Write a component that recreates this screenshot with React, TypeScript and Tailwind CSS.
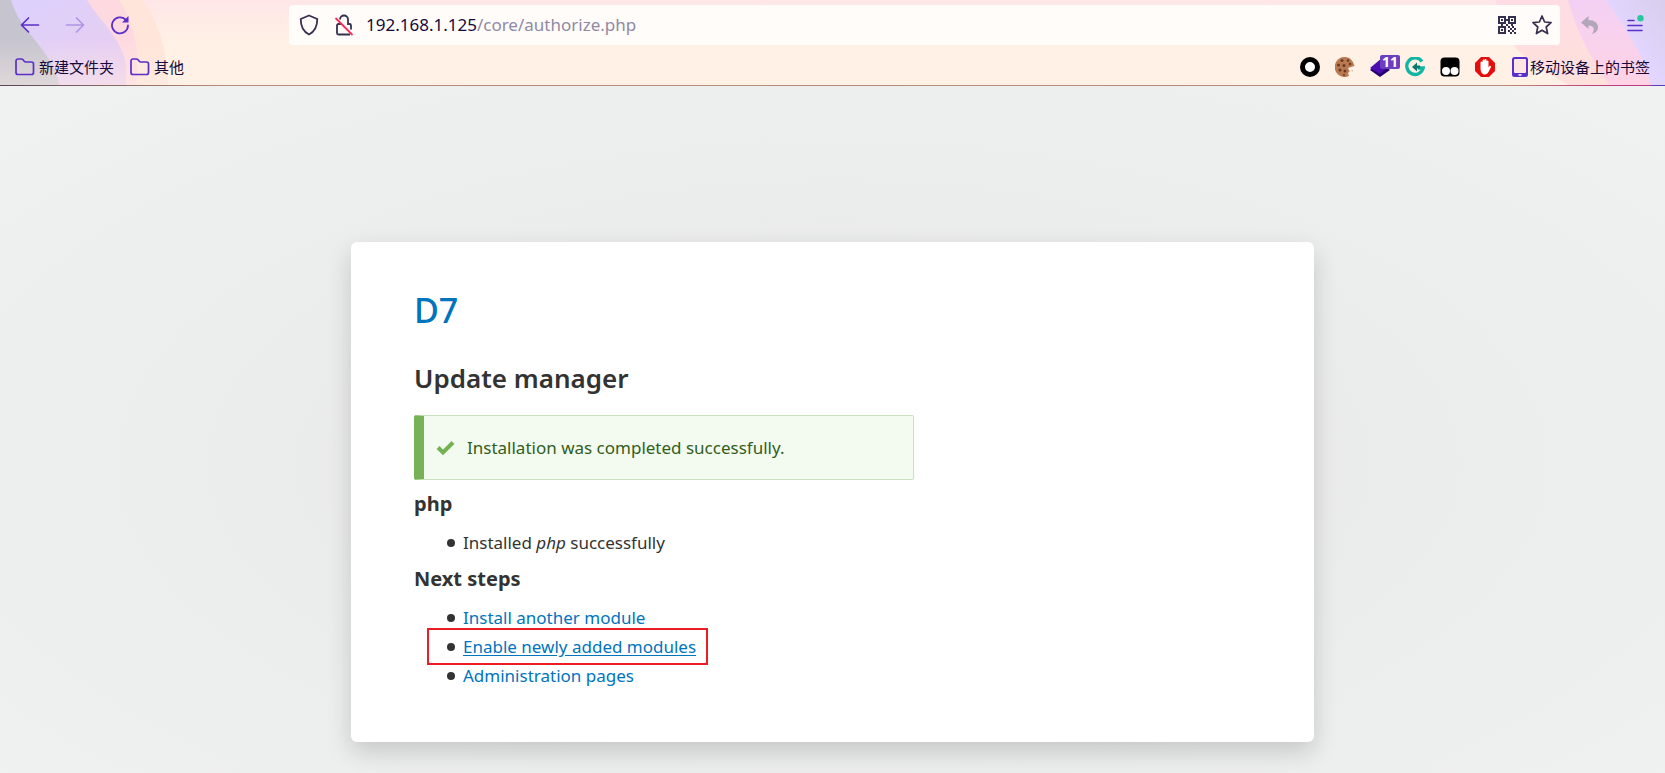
import type { ReactNode } from "react";

function HeaderArt() {
  return (
    <div className="pointer-events-none absolute inset-0 overflow-hidden bg-linear-to-b from-[#ffe6e8] to-[#fff1e5] to-50%">
      <svg className="absolute left-0 top-0" width="170" height="86" viewBox="0 0 170 86" aria-hidden="true">
        <defs>
          <linearGradient id="fade" x1="0" y1="0" x2="0" y2="1">
            <stop offset=".45" stopColor="#fff1e5" stopOpacity="0" />
            <stop offset="1" stopColor="#fff1e5" stopOpacity=".45" />
          </linearGradient>
          <linearGradient id="pinkLeft" x1="0" y1="0" x2="0" y2="1">
            <stop offset="0" stopColor="#fdcdf4" />
            <stop offset="1" stopColor="#fddcdf" />
          </linearGradient>
          <linearGradient id="lavenderLeft" x1="0" y1="0" x2="1" y2="1">
            <stop offset=".2" stopColor="#ddd0fa" />
            <stop offset="1" stopColor="#eccdee" />
          </linearGradient>
        </defs>
        <path d="M0 0H143C158 22 167 48 168 86H0Z" fill="#ffe5da" />
        <path d="M0 0H119C135 24 140 52 136 86H0Z" fill="#fedae0" />
        <path d="M0 0H87C110 34 128 54 126 86H0Z" fill="url(#pinkLeft)" />
        <path d="M0 0H87C97 18 125 42 126 66V86H0Z" fill="url(#lavenderLeft)" />
        <path d="M0 0H11C21 35 50 45 60 86H0Z" fill="#c6c4cf" />
        <path d="M0 0H170V86H0Z" fill="url(#fade)" />
      </svg>
      <svg className="absolute right-0 top-0" width="245" height="86" viewBox="0 0 245 86" aria-hidden="true">
        <defs>
          <linearGradient id="pinkRight" x1="0" y1="0" x2="0" y2="1">
            <stop offset="0" stopColor="#ffdce4" />
            <stop offset="1" stopColor="#ffe0db" />
          </linearGradient>
          <linearGradient id="orchid" x1="0" y1="0" x2="0" y2="1">
            <stop offset="0" stopColor="#f3d0f4" />
            <stop offset="1" stopColor="#ffd3e4" />
          </linearGradient>
          <linearGradient id="lavenderRight" x1="0" y1="1" x2="1" y2="0">
            <stop offset=".5" stopColor="#e2d5fe" />
            <stop offset="1" stopColor="#d9cdec" />
          </linearGradient>
        </defs>
        <path d="M75 0H245V86H150C130 74 95 55 90 38Z" fill="url(#pinkRight)" />
        <path d="M148 0H245V86H190C172 60 158 36 148 0Z" fill="url(#orchid)" />
        <path d="M186 0H245V86H231C224 54 204 26 186 0Z" fill="url(#lavenderRight)" />
      </svg>
    </div>
  );
}

function Arrow({ color, flip }: { color: string; flip?: boolean }) {
  return (
    <svg width="20" height="18" viewBox="0 0 20 18" fill="none" stroke={color} strokeWidth="1.700" strokeLinecap="round" strokeLinejoin="round" aria-hidden="true">
      <path d={flip ? "M1.500 9H18.500M11.500 2L18.500 9L11.500 16" : "M18.500 9H1.500M8.500 2L1.500 9L8.500 16"} />
    </svg>
  );
}

function Shield() {
  return (
    <svg width="20" height="22" viewBox="0 0 20 22" fill="none" stroke="#35304f" strokeWidth="1.8" strokeLinejoin="round" aria-hidden="true">
      <path d="M10 1.500L18.300 5C18.300 12 16 17.500 10 20.500C4 17.500 1.700 12 1.700 5Z" />
    </svg>
  );
}

function BrokenLock() {
  return (
    <svg width="20" height="22" viewBox="0 0 20 22" fill="none" stroke="#35304f" strokeWidth="1.8" aria-hidden="true">
      <path d="M6 5.500a4 4 0 0 1 8 0V10H15.500a1.500 1.500 0 0 1 1.500 1.500V15.500M6 8.500V10H4.500A1.500 1.500 0 0 0 3 11.500V19a1.500 1.500 0 0 0 1.500 1.500H16" />
      <path d="M1.500 4L18.500 21" stroke="#fb2b56" />
    </svg>
  );
}

function Reload() {
  return (
    <svg width="20" height="20" viewBox="0 0 20 20" fill="none" stroke="#5b2fc9" strokeWidth="1.800" strokeLinecap="round" aria-hidden="true">
      <path d="M15.500 4.500A8 8 0 1 0 18 10.500" />
      <path d="M18.500 1V7.500H12Z" fill="#5b2fc9" stroke="none" />
    </svg>
  );
}

function QrCode() {
  return (
    <svg width="18" height="18" viewBox="0 0 18 18" fill="#35304f" aria-hidden="true">
      <path fillRule="evenodd" d="M0 0H8V8H0ZM2 2V6H6V2ZM10 0H18V8H10ZM12 2V6H16V2ZM0 10H8V18H0ZM2 12V16H6V12Z" />
      <path d="M3 3h2v2H3zM13 3h2v2h-2zM3 13h2v2H3zM8 3h2v2H8zM3 8h2v2H3zM8 8h2v2H8zM13 8h2v2h-2zM10 10h2v2h-2zM14 10h2v2h-2zM12 12h2v2h-2zM16 12h2v2h-2zM10 14h2v2h-2zM14 14h2v2h-2zM12 16h2v2h-2zM16 16h2v2h-2z" />
    </svg>
  );
}

function StarOutline() {
  return (
    <svg width="20" height="20" viewBox="0 0 20 20" fill="none" stroke="#35304f" strokeWidth="1.700" strokeLinejoin="round" aria-hidden="true">
      <path d="M10 1L12.600 7L19 7.600L14.200 12L15.600 18.600L10 15.200L4.400 18.600L5.800 12L1 7.600L7.400 7Z" />
    </svg>
  );
}

function Undo() {
  return (
    <svg width="18" height="18" viewBox="0 0 18 18" fill="#b3a5ba" aria-hidden="true">
      <path d="M0 6.500L7.500 0V4C13.500 4 17 7 17 11C17 14 15.500 16.500 11 18C14.500 13 12.500 9.500 7.500 9.500V13Z" />
    </svg>
  );
}

function Menu() {
  return (
    <svg width="18" height="20" viewBox="0 0 18 20" aria-hidden="true">
      <path d="M2 5.500H8M2 10.500H16M2 15.500H16" stroke="#5b2fc9" strokeWidth="1.600" strokeLinecap="round" />
      <circle cx="14.500" cy="3.200" r="3.200" fill="#26c7a0" />
    </svg>
  );
}

function FolderOutline() {
  return (
    <svg width="20" height="18" viewBox="0 0 20 18" fill="none" stroke="#5b2fc9" strokeWidth="1.700" strokeLinejoin="round" aria-hidden="true">
      <path d="M1 14.500V3A2 2 0 0 1 3 1H6.500A2 2 0 0 1 8 1.700L9.300 3.300A2 2 0 0 0 10.800 4H16.500A2 2 0 0 1 18.500 6V14.500A2 2 0 0 1 16.500 16.500H3A2 2 0 0 1 1 14.500Z" />
    </svg>
  );
}

function Ring() {
  return (
    <svg width="20" height="20" viewBox="0 0 20 20" aria-hidden="true">
      <circle cx="10" cy="10" r="7.500" fill="#fff" stroke="#000" strokeWidth="5" />
    </svg>
  );
}

function Cookie() {
  return (
    <svg width="20" height="20" viewBox="0 0 20 20" aria-hidden="true">
      <path d="M15 1.500A10 10 0 1 0 14 19L13 16L15 14L13 11L16 10L19.500 9L18 5Z" fill="#b97a52" />
      <g fill="#6b3a22">
        <circle cx="7" cy="3.500" r="1.500" />
        <circle cx="13" cy="3.500" r="1.300" />
        <circle cx="3.500" cy="8" r="1.500" />
        <circle cx="9" cy="8.500" r="1.500" />
        <circle cx="15" cy="7" r="1.300" />
        <circle cx="5" cy="13" r="1.500" />
        <circle cx="10" cy="14" r="1.500" />
        <circle cx="9" cy="18" r="1" />
      </g>
      <path d="M13.500 11.500L16 12L14.500 14ZM15 17l2-1.500.500 2z" fill="#fff" />
      <path d="M16.500 13l1.500.500-1 1z" fill="#b97a52" />
    </svg>
  );
}

function Layers() {
  return (
    <svg width="20" height="20" viewBox="0 0 20 20" aria-hidden="true">
      <path d="M0 13L10 5L20 13L10 20Z" fill="#23006e" />
      <path d="M0 11L12 1L20 8L10 17Z" fill="#4b0cb0" />
    </svg>
  );
}

function LetterMark() {
  return (
    <svg width="20" height="20" viewBox="0 0 20 20" fill="none" aria-hidden="true">
      <path d="M17 4.500A8.300 8.300 0 1 0 18.200 11H13" stroke="#11b5a4" strokeWidth="3.300" />
      <path d="M7 10L12 5.500V8.500H15V11.500H12V14.500Z" fill="#0b7a6e" />
    </svg>
  );
}

function Monkey() {
  return (
    <svg width="20" height="20" viewBox="0 0 20 20" aria-hidden="true">
      <rect x="0.500" y="0.500" width="19" height="19" rx="4" fill="#000" />
      <circle cx="6" cy="14" r="4" fill="#fff" />
      <circle cx="14.500" cy="14" r="4" fill="#fff" />
    </svg>
  );
}

function Blocker() {
  return (
    <svg width="20" height="20" viewBox="0 0 20 20" aria-hidden="true">
      <path d="M6 0H14L20 6V14L14 20H6L0 14V6Z" fill="#e60d0d" />
      <path d="M5.500 11V5.500a1 1 0 0 1 2 0V3.500a1 1 0 0 1 2 0V3a1 1 0 0 1 2 0V4.500a1 1 0 0 1 2 0V10.500l1-1.500a1 1 0 0 1 1.500 1L13.500 15a4 4 0 0 1-3.500 2.500C7 17.500 5.500 15 5.500 11Z" fill="#fff" />
    </svg>
  );
}

function Phone() {
  return (
    <svg width="16" height="20" viewBox="0 0 16 20" aria-hidden="true">
      <rect width="16" height="20" rx="2.500" fill="#5b2fc9" />
      <rect x="2" y="2" width="12" height="14" rx="1" fill="#ffe6e4" />
      <rect x="6.500" y="17.200" width="3" height="1.500" fill="#fff" />
    </svg>
  );
}

function IconButton({ label, children }: { label: string; children: ReactNode }) {
  return (
    <button type="button" aria-label={label} className="relative flex h-5 w-5 shrink-0 items-center justify-center">
      {children}
    </button>
  );
}

function BrowserBar() {
  return (
    <header className="relative text-[#15093c]">
      <HeaderArt />
      <div className="relative flex items-center pb-1 pl-5 pr-5 pt-[5px]">
        <div className="flex w-[269px] shrink-0 items-center gap-[25px]">
          <IconButton label="后退"><Arrow color="#5b2fc9" /></IconButton>
          <IconButton label="前进"><Arrow color="#b095e4" flip /></IconButton>
          <IconButton label="刷新"><Reload /></IconButton>
        </div>
        <div className="flex h-10 flex-1 items-center gap-[15px] rounded bg-[#fffcfa] pl-[10px] pr-2">
          <IconButton label="防护"><Shield /></IconButton>
          <div className="flex flex-1 items-center gap-3">
            <IconButton label="不安全的连接"><BrokenLock /></IconButton>
            <div className="whitespace-nowrap font-['Noto_Sans',sans-serif] text-[17px] leading-6">
              192.168.1.125<span className="text-[#8f8aa3]">/core/authorize.php</span>
            </div>
          </div>
          <IconButton label="二维码"><QrCode /></IconButton>
          <IconButton label="收藏"><StarOutline /></IconButton>
        </div>
        <div className="flex shrink-0 items-center gap-[25px] pl-5">
          <IconButton label="撤销"><Undo /></IconButton>
          <IconButton label="菜单"><Menu /></IconButton>
        </div>
      </div>
      <nav className="relative flex h-9 items-center justify-between px-[15px] font-['Noto_Sans_CJK_SC',sans-serif] text-[15px] leading-5">
        <div className="flex items-center gap-4">
          <a href="#" className="flex items-center gap-1"><FolderOutline />新建文件夹</a>
          <a href="#" className="flex items-center gap-1"><FolderOutline />其他</a>
        </div>
        <div className="flex items-center gap-[17px]">
          <div className="flex items-center gap-[15px]">
            <IconButton label="圆环"><Ring /></IconButton>
            <IconButton label="Cookie"><Cookie /></IconButton>
            <IconButton label="图层">
              <Layers />
              <span className="absolute -right-2.5 -top-0.5 w-5 rounded-xs bg-[#6c3fc0] text-center font-['Noto_Sans',sans-serif] text-[14px] font-bold leading-[14px] text-white">11</span>
            </IconButton>
            <IconButton label="同步"><LetterMark /></IconButton>
            <IconButton label="脚本"><Monkey /></IconButton>
            <IconButton label="广告拦截"><Blocker /></IconButton>
          </div>
          <a href="#" className="flex items-center gap-0.5"><Phone />移动设备上的书签</a>
        </div>
      </nav>
      <div className="relative flex h-px">
        <div className="flex-1 bg-linear-to-r from-[#5b4658] via-[#b98d74] via-15% to-[#b98d74]" />
        <div className="w-[150px] bg-linear-to-r from-[#b98d74] via-[#c0407a] via-60% to-[#b8388a]" />
        <div className="w-[14px] bg-[#5b3fc0]" />
      </div>
    </header>
  );
}

export default function App() {
  return (
    <div className="flex min-h-screen flex-col bg-white">
      <BrowserBar />
      <main className="flex-1 bg-radial-[at_50%_55%] from-[#e7e7e7] to-[#f0f1f1] px-4 pb-[31px] pt-[156px] font-['Noto_Sans',sans-serif] text-[17px] leading-[29px] text-[#333]">
        <div className="mx-auto max-w-[963px] rounded-md bg-white px-[63px] pb-[52px] pt-[46px] shadow-[0_10px_25px_rgba(0,0,0,0.16)]">
          <h1 className="text-[34px] font-medium leading-[44px]">
            <a href="#" className="text-[#0074bd]">D7</a>
          </h1>
          <h2 className="mt-7 text-[26px] font-semibold leading-9">Update manager</h2>
          <div role="status" className="mt-[19px] flex max-w-[500px] items-center gap-3 rounded-xs border border-l-[10px] border-[#c9e1bd] border-l-[#77b259] bg-[#f3faef] py-[17px] pl-3 text-[#325e1c]">
            <svg width="19" height="16" viewBox="0 0 19 16" fill="none" stroke="#73b355" strokeWidth="4" aria-hidden="true">
              <path d="M2 7.500L7 12.500L17 2.500" />
            </svg>
            Installation was completed successfully.
          </div>
          <h3 className="mt-[9px] text-[20px] font-bold">php</h3>
          <ul className="mt-[10px] pl-[49px]">
            <Item>Installed <em>php</em> successfully</Item>
          </ul>
          <h3 className="mt-[7px] text-[20px] font-bold">Next steps</h3>
          <ul className="mt-[10px] pl-[49px] text-[#0074bd]">
            <Item><a href="#">Install another module</a></Item>
            <Item marked><a href="#" className="underline underline-offset-2">Enable newly added modules</a></Item>
            <Item><a href="#">Administration pages</a></Item>
          </ul>
        </div>
      </main>
    </div>
  );
}

function Item({ marked, children }: { marked?: boolean; children: ReactNode }) {
  return (
    <li className="relative w-fit">
      <span className="absolute -left-4 top-[11px] h-2 w-2 rounded-full bg-[#333]" />
      {marked && <span className="pointer-events-none absolute -bottom-1 -left-9 -right-3 -top-1 border-2 border-[#ec1c24]" />}
      {children}
    </li>
  );
}
